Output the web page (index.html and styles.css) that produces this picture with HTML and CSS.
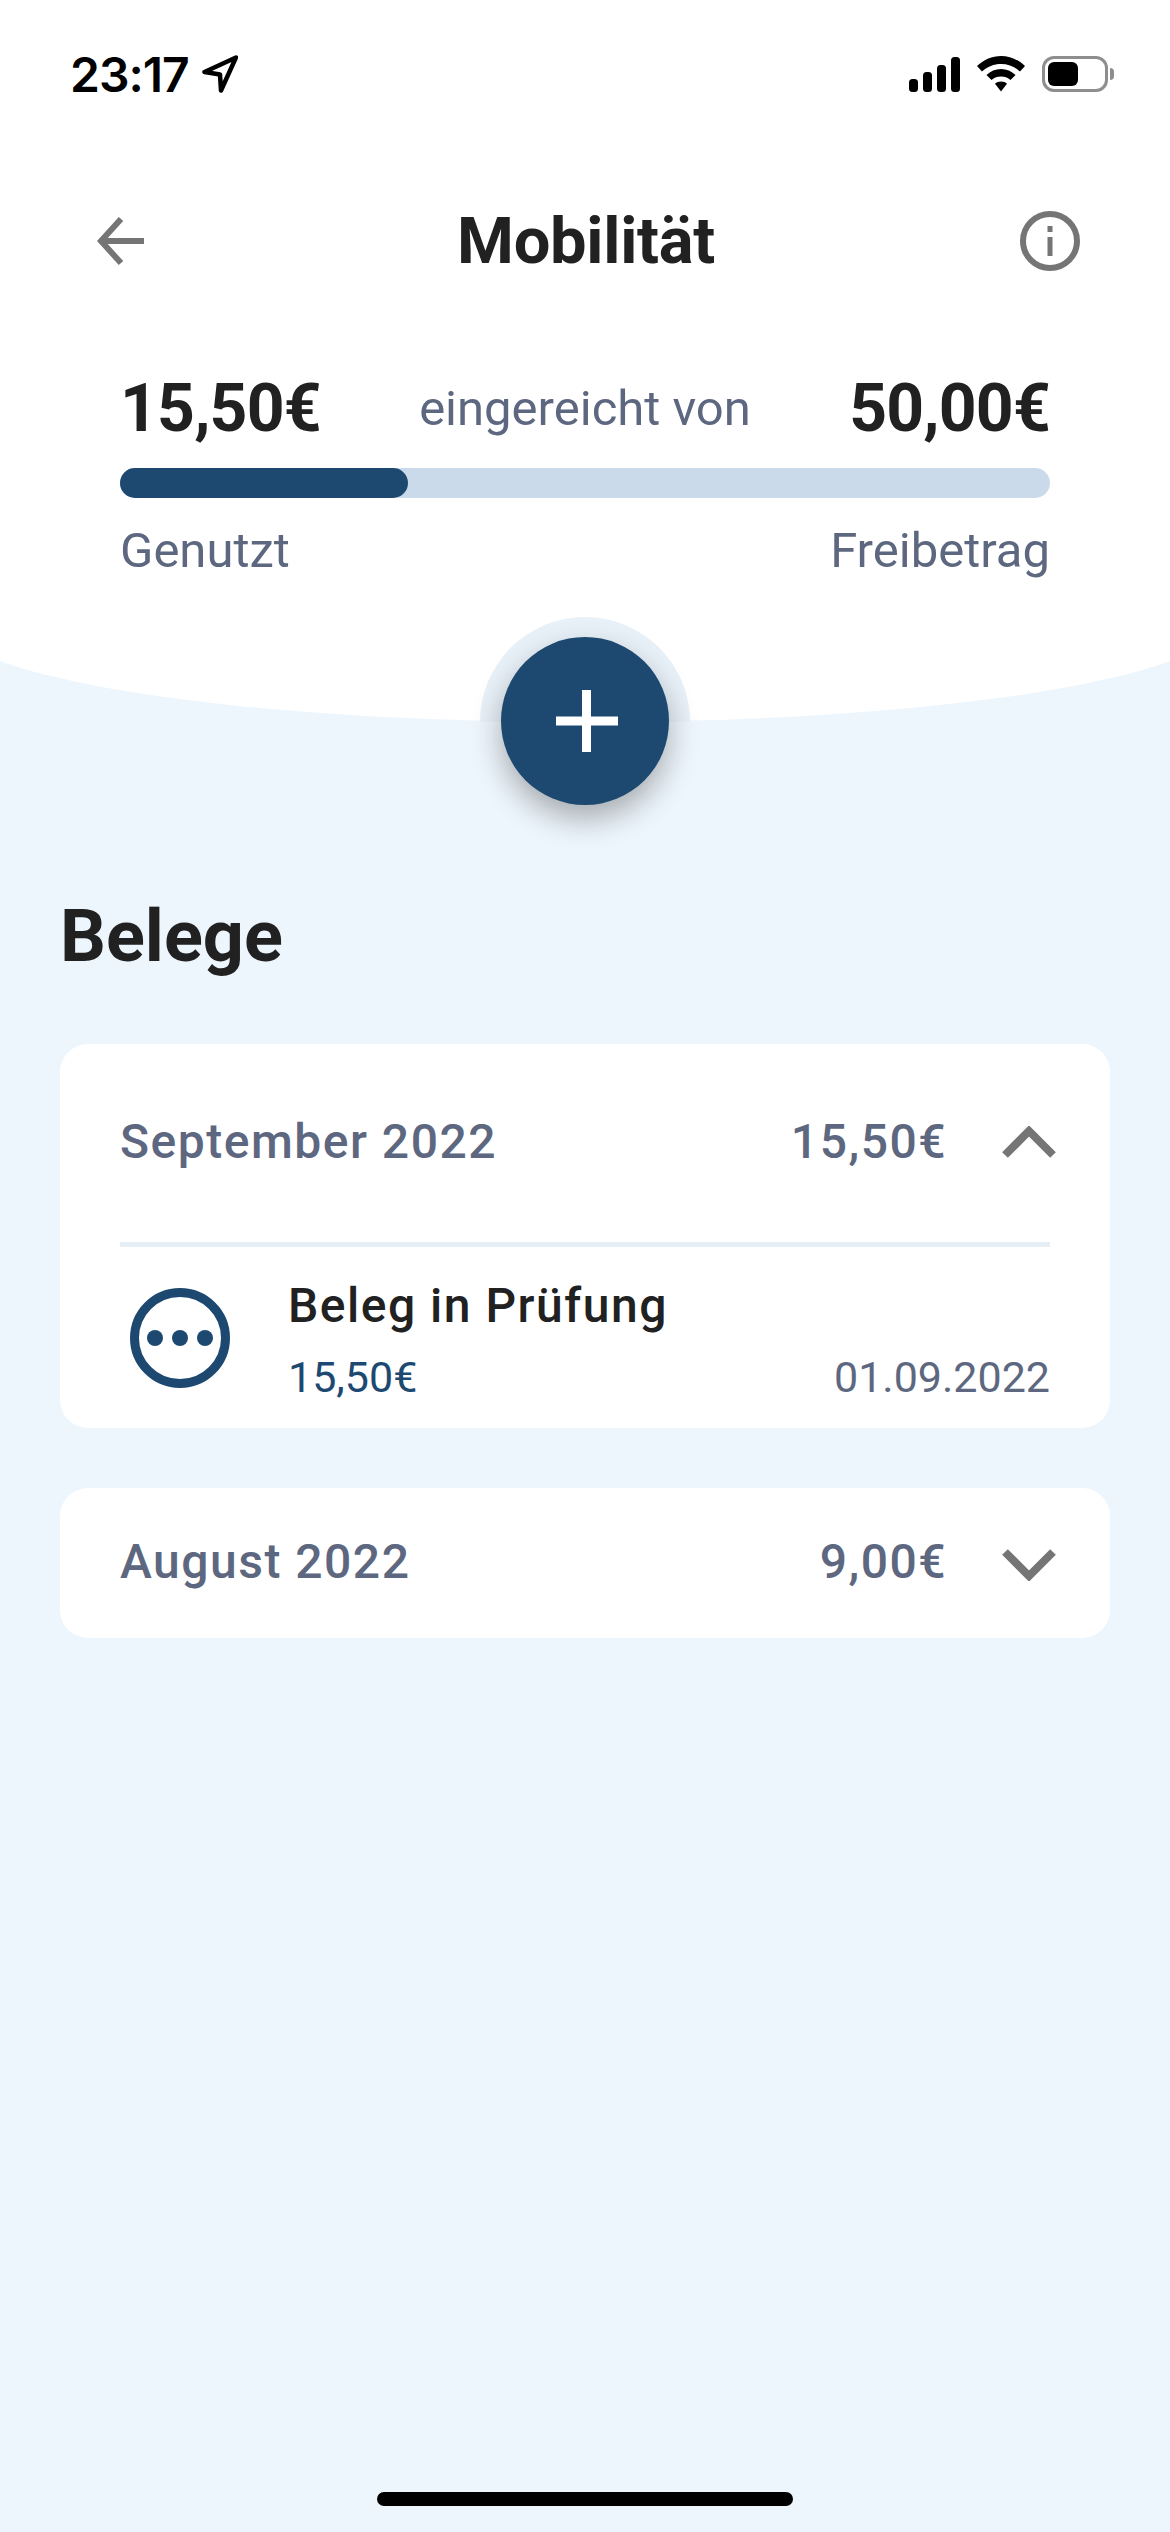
FILE: index.html
```html
<!DOCTYPE html>
<html lang="de">
<head>
  <meta charset="UTF-8" />
  <meta name="viewport" content="width=device-width, initial-scale=1.0"/>
  <title>Mobilität</title>
  <link rel="stylesheet" href="styles.css">
</head>
<body>
  <div class="page">
    <header class="hero">
      <div class="status-bar">
        <div class="status-time">
          <span>23:17</span>
          <svg class="status-arrow" width="36" height="38" viewBox="0 0 36 38"><path d="M34 2.500 L2.500 17 L18 19.500 L19 35.500 Z" fill="none" stroke="#000" stroke-width="4.500" stroke-linejoin="round"/></svg>
        </div>
        <div class="status-icons">
          <svg width="51" height="35" viewBox="0 0 51 35"><rect x="0" y="22" width="9" height="13" rx="3.500"/><rect x="14" y="15" width="9" height="20" rx="3.500"/><rect x="28" y="8" width="9" height="27" rx="3.500"/><rect x="42" y="0" width="9" height="35" rx="3.500"/></svg>
          <svg width="48" height="36" viewBox="0 0 48 36"><path d="M24 0 C33 0 41 3.500 48 10 L43 15.500 C37.500 10.500 31 8 24 8 C17 8 10.500 10.500 5 15.500 L0 10 C7 3.500 15 0 24 0 Z"/><path d="M24 13 C29.500 13 34.500 15 38.500 19 L33.500 24 C31 21.500 27.500 20.500 24 20.500 C20.500 20.500 17 21.500 14.500 24 L9.500 19 C13.500 15 18.500 13 24 13 Z"/><path d="M24 25.500 C26.500 25.500 28.500 26.300 30 27.700 L24 35.500 L18 27.700 C19.500 26.300 21.500 25.500 24 25.500 Z"/></svg>
          <div class="battery">
            <div class="battery-body"><div class="battery-level"></div></div>
            <div class="battery-nub"></div>
          </div>
        </div>
      </div>

      <div class="top-bar">
        <svg class="back-icon" width="47" height="48" viewBox="0 0 47 48"><path d="M47 24 H5 M24 2 L4 24 L24 46" fill="none" stroke="#757575" stroke-width="6"/></svg>
        <h1>Mobilität</h1>
        <svg class="info-icon" width="60" height="60" viewBox="0 0 60 60"><circle cx="30" cy="30" r="27" fill="none" stroke="#757575" stroke-width="6"/><rect x="27.500" y="26" width="5" height="19" fill="#757575"/><rect x="27.500" y="15" width="5" height="6" fill="#757575"/></svg>
      </div>

      <div class="budget">
        <div class="budget-top">
          <span class="budget-value">15,50€</span>
          <span class="budget-label">eingereicht von</span>
          <span class="budget-value">50,00€</span>
        </div>
        <div class="progress"><div class="progress-fill" style="width: 31%"></div></div>
        <div class="budget-bottom">
          <span>Genutzt</span>
          <span>Freibetrag</span>
        </div>
      </div>
    </header>

    <div class="fab-ring">
      <button class="fab">
        <svg class="fab-plus" width="62" height="62" viewBox="0 0 62 62"><path d="M0 26.500 H26 V0 H35 V26.500 H62 V35.500 H35 V62 H26 V35.500 H0 Z" fill="#fff"/></svg>
      </button>
    </div>

    <main class="content">
      <h2>Belege</h2>

      <section class="month-card">
        <div class="month-head">
          <span class="month-name">September 2022</span>
          <span class="month-sum">15,50€</span>
          <svg class="chevron" width="54" height="32" viewBox="0 0 54 32"><path d="M3 29 L27 5 L51 29" fill="none" stroke="#757575" stroke-width="8"/></svg>
        </div>
        <div class="month-body">
          <div class="receipt">
            <svg class="receipt-icon" width="100" height="100" viewBox="0 0 100 100"><circle cx="50" cy="50" r="45.500" fill="none" stroke="#1d4971" stroke-width="9"/><circle cx="25" cy="50" r="8" fill="#1d4971"/><circle cx="50" cy="50" r="8" fill="#1d4971"/><circle cx="75" cy="50" r="8" fill="#1d4971"/></svg>
            <div class="receipt-info">
              <div class="receipt-title">Beleg in Prüfung</div>
              <div class="receipt-meta">
                <span class="receipt-amount">15,50€</span>
                <span class="receipt-date">01.09.2022</span>
              </div>
            </div>
          </div>
        </div>
      </section>

      <section class="month-card">
        <div class="month-head month-head-closed">
          <span class="month-name">August 2022</span>
          <span class="month-sum">9,00€</span>
          <svg class="chevron chevron-down" width="54" height="32" viewBox="0 0 54 32"><path d="M3 3 L27 27 L51 3" fill="none" stroke="#757575" stroke-width="8"/></svg>
        </div>
      </section>
    </main>

    <div class="home-indicator"></div>
  </div>
</body>
</html>
```

FILE: styles.css
```css
* {
  box-sizing: border-box;
}

html, body {
  margin: 0;
  padding: 0;
}

body {
  font-family: Roboto, Arial, sans-serif;
  background: #eef6fd;
  color: #212121;
}

.page {
  width: 1170px;
  height: 2532px;
  overflow: hidden;
  display: flex;
  flex-direction: column;
}

/* oberer weisser Bereich mit Rundung */
.hero {
  position: relative;
  height: 722px;
  padding-top: 55px;
  flex: none;
}

.hero::before {
  content: "";
  position: absolute;
  top: 0;
  bottom: 0;
  left: -50px;
  right: -50px;
  background: #fff;
  border-radius: 0 0 635px 635px / 0 0 100px 100px;
}

.hero > * {
  position: relative;
}

.status-bar {
  display: flex;
  justify-content: space-between;
  align-items: center;
  height: 38px;
  padding: 0 56px 0 70px;
}

.status-time {
  display: flex;
  align-items: center;
  gap: 13px;
  font-family: Inter, Arial, sans-serif;
  font-size: 48px;
  font-weight: 600;
  letter-spacing: -1px;
  color: #000;
}

.status-icons {
  display: flex;
  align-items: center;
  gap: 17px;
}

.battery {
  display: flex;
  align-items: center;
  gap: 2px;
}

.battery-body {
  width: 66px;
  height: 36px;
  border: 3px solid #8e8e8e;
  border-radius: 12px;
  padding: 3px;
}

.battery-level {
  width: 30px;
  height: 100%;
  background: #000;
  border-radius: 6px;
}

.battery-nub {
  width: 4px;
  height: 12px;
  background: #8e8e8e;
  border-radius: 0 4px 4px 0;
}

.top-bar {
  display: flex;
  justify-content: space-between;
  align-items: center;
  margin-top: 118px;
  padding: 0 90px 0 97px;
  height: 60px;
}

.top-bar h1 {
  margin: 0 0 0 8px;
  font-size: 65px;
  font-weight: 700;
  letter-spacing: -0.3px;
  color: #212121;
}

.budget {
  margin-top: 99px;
  padding: 0 120px;
}

.budget-top {
  display: flex;
  justify-content: space-between;
  align-items: center;
}

.budget-value {
  font-size: 66px;
  font-weight: 700;
  letter-spacing: -0.8px;
  color: #212121;
}

.budget-label {
  font-size: 49px;
  color: #5d6880;
}

.progress {
  height: 30px;
  margin-top: 21px;
  background: #cbdaea;
  border-radius: 15px;
}

.progress-fill {
  height: 100%;
  background: #1d4971;
  border-radius: 15px;
}

.budget-bottom {
  display: flex;
  justify-content: space-between;
  margin-top: 24px;
  font-size: 49px;
  color: #5d6880;
}

.fab-ring {
  width: 210px;
  height: 105px;
  margin: -105px auto 0;
  padding-top: 20px;
  display: flex;
  justify-content: center;
  background: #e8f0f8;
  border-radius: 105px 105px 0 0;
  position: relative;
  flex: none;
}

.fab {
  flex: none;
  width: 168px;
  height: 168px;
  padding: 0;
  border: none;
  border-radius: 50%;
  background: #1d4971;
  display: flex;
  align-items: center;
  justify-content: center;
  box-shadow: 0 14px 30px rgba(0, 0, 0, 0.3);
}

.fab-plus {
  margin-left: 3px;
}

.content {
  padding: 0 60px;
  margin-top: 172px;
  flex: 1;
}

.content h2 {
  margin: 0;
  font-size: 72px;
  font-weight: 700;
  color: #212121;
}

.month-card {
  background: #fff;
  border-radius: 28px;
  margin-top: 65px;
}

.month-card + .month-card {
  margin-top: 60px;
}

.month-head {
  display: flex;
  align-items: center;
  height: 198px;
  padding: 0 54px 3px 60px;
  font-size: 48px;
  font-weight: 500;
  letter-spacing: 1.5px;
  color: #5d6880;
}

.month-head-closed {
  height: 150px;
}

.month-name {
  flex: 1;
}

.chevron {
  margin: 1px 0 0 55px;
}

.chevron-down {
  margin-top: 7px;
}

.month-body {
  margin: 0 60px;
  border-top: 5px solid #e6eef5;
  height: 186px;
}

.receipt {
  display: flex;
  align-items: flex-start;
  gap: 58px;
  padding-top: 30px;
}

.receipt-icon {
  margin: 11px 0 0 10px;
  flex: none;
}

.receipt-info {
  flex: 1;
}

.receipt-title {
  font-size: 48px;
  font-weight: 500;
  letter-spacing: 1.5px;
  color: #212121;
}

.receipt-meta {
  display: flex;
  justify-content: space-between;
  margin-top: 18px;
  font-size: 43px;
}

.receipt-amount {
  color: #1d4971;
}

.receipt-date {
  color: #5d6880;
}

.home-indicator {
  width: 416px;
  height: 14px;
  margin: 0 auto 26px;
  background: #000;
  border-radius: 7px;
}
```
